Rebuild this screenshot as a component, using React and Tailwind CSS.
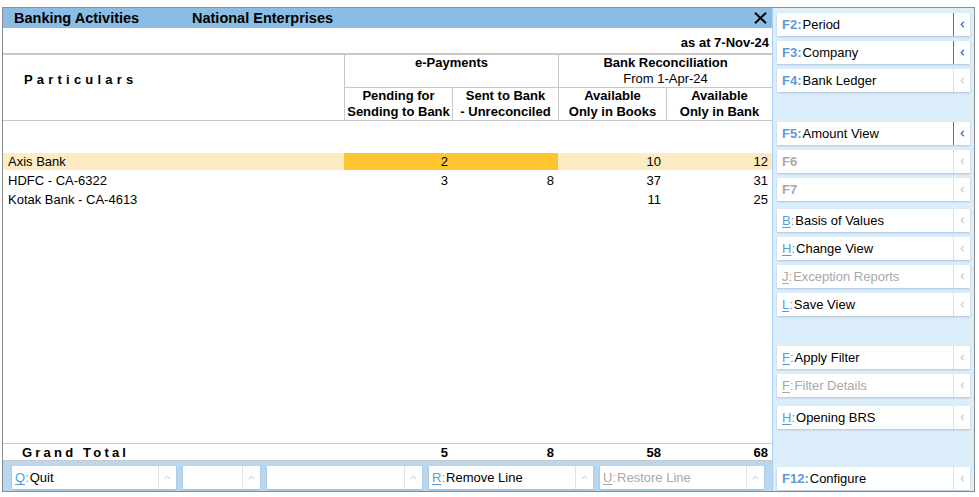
import React from 'react';

const rows = [
  { name: 'Axis Bank', pending: '2', sent: '', books: '10', bank: '12', selected: true },
  { name: 'HDFC - CA-6322', pending: '3', sent: '8', books: '37', bank: '31' },
  { name: 'Kotak Bank - CA-4613', pending: '', sent: '', books: '11', bank: '25' },
];

const sideButtons = [
  { k: 'F2', label: 'Period', active: true, gap: 'mt-0' },
  { k: 'F3', label: 'Company', active: true, gap: 'mt-[5px]' },
  { k: 'F4', label: 'Bank Ledger', gap: 'mt-[5px]' },
  { k: 'F5', label: 'Amount View', active: true, gap: 'mt-[30px]' },
  { k: 'F6', disabled: true, noColon: true, gap: 'mt-[5px]' },
  { k: 'F7', disabled: true, noColon: true, gap: 'mt-[5px]' },
  { k: 'B', label: 'Basis of Values', letter: true, gap: 'mt-[8px]' },
  { k: 'H', label: 'Change View', letter: true, gap: 'mt-[5px]' },
  { k: 'J', label: 'Exception Reports', letter: true, disabled: true, gap: 'mt-[5px]' },
  { k: 'L', label: 'Save View', letter: true, gap: 'mt-[5px]' },
  { k: 'F', label: 'Apply Filter', letter: true, gap: 'mt-[30px]' },
  { k: 'F', label: 'Filter Details', letter: true, disabled: true, gap: 'mt-[5px]' },
  { k: 'H', label: 'Opening BRS', letter: true, gap: 'mt-[9px]' },
  { k: 'F12', label: 'Configure', gap: 'mt-auto' },
];

const bottomButtons = [
  { w: 'w-[164px]', k: 'Q', label: 'Quit' },
  { w: 'w-[77px]' },
  { w: 'w-[155px]' },
  { w: 'w-[164px]', k: 'R', label: 'Remove Line' },
  { w: 'w-[164px]', k: 'U', label: 'Restore Line', disabled: true },
];

// Small "<" used on the right-hand buttons
const Chevron = ({ color }) => (
  <svg width="5" height="7" viewBox="0 0 5 7" fill="none">
    <path d="M3.8 0.8 L1.2 3.5 L3.8 6.2" stroke={color} strokeWidth="1.3" />
  </svg>
);

const Caret = () => (
  <svg width="7" height="5" viewBox="0 0 7 5" fill="none">
    <path d="M0.8 4 L3.5 1 L6.2 4" stroke="#c4c4c4" strokeWidth="1" />
  </svg>
);

function KeyLabel({ b }) {
  const keyColor = b.disabled ? 'text-[#a8a8a8]' : 'text-[#5b9bd5]';
  if (b.letter) {
    return (
      <span className={keyColor}>
        <span className="underline underline-offset-2">{b.k}</span>:
      </span>
    );
  }
  return <span className={`${keyColor} font-bold`}>{b.k}{b.noColon ? '' : ':'}</span>;
}

function SideButton({ b }) {
  return (
    <div className={`${b.gap} flex h-[23px] shrink-0 bg-white shadow-[0_1px_2px_rgba(70,100,140,0.3)]`}>
      <div className="flex flex-1 items-center gap-[1px] pl-[5px] text-[13px] leading-none">
        <KeyLabel b={b} />
        {b.label && (
          <span className={b.disabled ? 'text-[#a8a8a8]' : 'text-black'}>{b.label}</span>
        )}
      </div>
      <div
        className={`flex w-[17px] items-center justify-center border-l ${
          b.active ? 'border-[#3f74ba]' : 'border-[#dedede]'
        }`}
      >
        <Chevron color={b.active ? '#3f74ba' : '#cfcfcf'} />
      </div>
    </div>
  );
}

function BottomButton({ b }) {
  return (
    <div className={`${b.w} flex h-[23px] shrink-0 bg-white shadow-[0_1px_2px_rgba(70,100,140,0.3)]`}>
      <div className="flex flex-1 items-center gap-[1px] pl-[3px] text-[13px] leading-none">
        {b.k && (
          <>
            <span className={b.disabled ? 'text-[#a8a8a8]' : 'text-[#5b9bd5]'}>
              <span className="underline underline-offset-2">{b.k}</span>:
            </span>
            <span className={b.disabled ? 'text-[#a8a8a8]' : 'text-black'}>{b.label}</span>
          </>
        )}
      </div>
      <div className="flex w-[18px] items-center justify-center border-l border-[#e2e2e2]">
        <Caret />
      </div>
    </div>
  );
}

export default function App() {
  return (
    <div className="h-[497px] w-[979px] bg-white pt-[7px] pl-[2px] font-['Liberation_Sans',Arial,sans-serif] text-black">
      <div className="flex h-[485px] w-[973px] border border-[#8c8c8c]">
        {/* Main report */}
        <div className="flex w-[769px] flex-col">
          {/* Title bar */}
          <div className="flex h-[20px] items-center bg-[#8bbde4] pl-[11px] pr-[3px] text-[14.5px] font-bold leading-none">
            <span className="w-[178px]">Banking Activities</span>
            <span className="flex-1">National Enterprises</span>
            <svg width="13" height="12" viewBox="0 0 13 12" className="mr-[2px]">
              <path d="M1 0.8 L12 11.2 M12 0.8 L1 11.2" stroke="#000" strokeWidth="2" />
            </svg>
          </div>

          {/* Date */}
          <div className="flex h-[27px] items-end justify-end border-b-2 border-[#c8c8c8] pr-[3px] pb-[2px] text-[13px] font-bold leading-[16px]">
            as at 7-Nov-24
          </div>

          {/* Column headers */}
          <div className="flex h-[66px] border-b border-[#c8c8c8] text-[13px] leading-[16px]">
            <div className="w-[341px] pt-[17px] pl-[21px] font-bold tracking-[4.2px]">Particulars</div>
            <div className="flex w-[214px] flex-col border-l border-[#c8c8c8]">
              <div className="h-[33px] border-b border-[#c8c8c8] text-center font-bold">e-Payments</div>
              <div className="flex flex-1 font-bold">
                <div className="w-[107px] text-center">Pending for<br />Sending to Bank</div>
                <div className="flex-1 border-l border-[#c8c8c8] text-center">Sent to Bank<br />- Unreconciled</div>
              </div>
            </div>
            <div className="flex flex-1 flex-col border-l border-[#c8c8c8]">
              <div className="h-[33px] border-b border-[#c8c8c8] text-center">
                <div className="font-bold">Bank Reconciliation</div>
                <div>From 1-Apr-24</div>
              </div>
              <div className="flex flex-1 font-bold">
                <div className="w-[107px] text-center">Available<br />Only in Books</div>
                <div className="flex-1 border-l border-[#c8c8c8] text-center">Available<br />Only in Bank</div>
              </div>
            </div>
          </div>

          {/* Body */}
          <div className="flex-1 pt-[32px] text-[13px]">
            {rows.map((r) => (
              <div
                key={r.name}
                className={`mb-[2px] flex h-[17px] items-center leading-none ${r.selected ? 'bg-[#fdebc3]' : ''}`}
              >
                <div className="w-[341px] pl-[5px]">{r.name}</div>
                <div className={`flex h-full w-[214px] items-center ${r.selected ? 'bg-[#fec52f]' : ''}`}>
                  <div className="w-[107px] pr-[3px] text-right">{r.pending}</div>
                  <div className="w-[107px] pr-[4px] text-right">{r.sent}</div>
                </div>
                <div className="w-[107px] pr-[4px] text-right">{r.books}</div>
                <div className="w-[107px] pr-[4px] text-right">{r.bank}</div>
              </div>
            ))}
          </div>

          {/* Grand total */}
          <div className="flex h-[18px] items-center border-y border-[#c8c8c8] text-[13px] font-bold leading-none">
            <div className="w-[341px] pl-[19px] tracking-[3.2px]">Grand Total</div>
            <div className="w-[107px] pr-[3px] text-right">5</div>
            <div className="w-[107px] pr-[4px] text-right">8</div>
            <div className="w-[107px] pr-[4px] text-right">58</div>
            <div className="w-[107px] pr-[4px] text-right">68</div>
          </div>

          {/* Bottom buttons */}
          <div className="flex h-[30px] gap-[7px] bg-[#b9d8f0] pt-[5px] pl-[9px]">
            {bottomButtons.map((b, i) => (
              <BottomButton key={i} b={b} />
            ))}
          </div>
        </div>

        {/* Right button panel */}
        <div className="flex w-[202px] flex-col border-l border-[#a6cdec] bg-[#ddeefb] px-[4px] pt-[5px] pb-[1px]">
          {sideButtons.map((b, i) => (
            <SideButton key={i} b={b} />
          ))}
        </div>
      </div>
    </div>
  );
}
